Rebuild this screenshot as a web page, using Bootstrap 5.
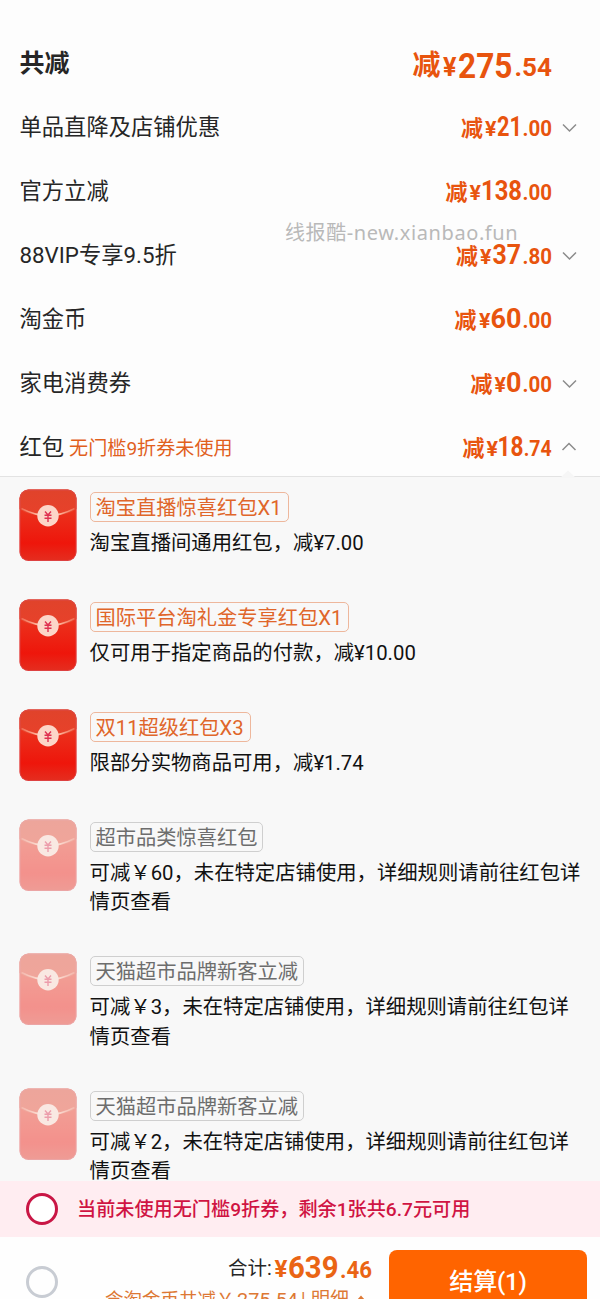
<!DOCTYPE html>
<html lang="zh-CN">
<head>
<meta charset="utf-8">
<meta name="viewport" content="width=device-width, initial-scale=1">
<title>优惠明细</title>
<link href="https://cdn.jsdelivr.net/npm/bootstrap@5.3.0/dist/css/bootstrap.min.css" rel="stylesheet">
<style>
html,body{height:1299px;overflow:hidden}
body{font-family:Roboto,"Noto Sans CJK SC",sans-serif;background:#fdfdfd;color:#262626}
.screen{width:600px;height:1299px}
.sum-list{height:476px;padding-top:30px}
.sum-row{height:64px;padding-left:19.5px;font-size:22.3px}
.sum-row.total{height:65px;font-size:25px;font-weight:700}
.sum-label{padding-top:2px}
.sum-row .hint{font-size:19.1px;color:#e1601d;margin-left:5px}
.price{width:160px;height:64px;fill:#e8540e;font-weight:700;flex:none;overflow:visible}
.price .n{font-family:Roboto,sans-serif}
.price .c{font-family:"Noto Sans CJK SC",sans-serif}
.arrow{width:48px;height:64px;fill:none;stroke:#8c8c8c;stroke-width:1.5;flex:none}
.watermark{left:285px;top:217px;font-family:"Noto Sans","Noto Sans CJK SC",sans-serif;font-size:20px;line-height:32px;color:#b9b9b9;white-space:nowrap;letter-spacing:.6px}
.panel{height:705px;background:#f8f8f8;border-top:1px solid #e3e3e3;padding:12px 0 0 19px}
.notch{right:24px;top:-7px;width:16px;height:8px}
.coupon{height:110px}
.coupon.tall{height:134.4px}
.envelope{width:58px;height:73px;flex:none}
.off .envelope{opacity:.45}
.coupon-text{margin-left:12.6px;padding-top:3px;color:#111}
.tag{height:30px;border:1px solid #eeb79c;border-radius:5px;padding:1px 6px 0 5px;font-size:20.25px;line-height:28px;color:#e0662a;white-space:nowrap}
.off .tag{border-color:#cfcfcf;color:#6d6d6d;padding-right:4.5px}
.desc{font-size:20.35px;line-height:29.3px;margin-top:7px;white-space:nowrap}
.notice{height:56px;background:#ffedf1;color:#d01443;font-size:19.15px;font-weight:500;padding-left:25.5px}
.notice-text{margin-left:19.5px;padding-top:2px}
.ring{width:32px;height:32px;border:3px solid #c91645;border-radius:50%;background:#fff;flex:none}
.ring.idle{border-color:#c8ccd3;background:transparent;margin-top:29px}
.footer-bar{height:62px;background:#fefefe;padding-left:25.5px}
.amount{width:272px;margin-left:46.5px;height:62px;flex:none}
.pay{width:198px;height:62px;margin:13px 0 0 13px;background:#ff6400;color:#fff;border-radius:8px;font-size:24px;font-weight:500;line-height:64px;letter-spacing:-.2px;flex:none}
</style>
</head>
<body>
<svg width="0" height="0" class="position-absolute">
  <defs>
    <linearGradient id="bodyFill" x1="0" y1="0" x2="0" y2="1"><stop offset="0" stop-color="#ea4428"/><stop offset=".45" stop-color="#ec2817"/><stop offset=".75" stop-color="#ee160b"/><stop offset="1" stop-color="#e42e20"/></linearGradient>
    <linearGradient id="flapFill" x1="0" y1="0" x2="0" y2="1"><stop offset="0" stop-color="#e0432b"/><stop offset="1" stop-color="#e8412a"/></linearGradient>
    <linearGradient id="strap" x1="0" y1="0" x2="1" y2="0"><stop offset="0" stop-color="#ffb8a0" stop-opacity=".35"/><stop offset=".3" stop-color="#ffb8a0"/><stop offset=".7" stop-color="#ffb8a0"/><stop offset="1" stop-color="#ffb8a0" stop-opacity=".35"/></linearGradient>
    <symbol id="env" viewBox="0 0 58 73">
      <rect x=".5" y=".5" width="57" height="71.500" rx="9" fill="url(#bodyFill)"/>
      <path d="M.5 20V9.500a9 9 0 0 1 9-9h39a9 9 0 0 1 9 9V20Q49 27 29 27T.5 20Z" fill="url(#flapFill)"/>
      <rect x="1" y="1" width="56" height="70.500" rx="8.500" fill="none" stroke="#d8505a" stroke-opacity=".6"/>
      <path d="M2.500 20.500Q12 27 29 27T55.500 20.500" fill="none"/>
      <path d="M2.500 19.500Q29 33.500 55.500 19.500" fill="none" stroke="url(#strap)" stroke-width="1.500"/>
      <circle cx="29" cy="26.700" r="10.700" fill="#fcd6c8"/>
      <path d="M26 22.500 29 26 32 22.500M25.500 26.300H32.500M25.500 29.300H32.500M29 26V33" fill="none" stroke="#df3050" stroke-width="1.400"/>
    </symbol>
  </defs>
</svg>
<main class="screen position-relative overflow-hidden">
  <section class="sum-list">
    <div class="sum-row total d-flex align-items-center justify-content-between"><span class="sum-label">共减</span><div class="d-flex"><svg class="price"><text class="c" x="20.500" y="44" font-size="28">减</text><text class="n" x="51" y="44.500" font-size="25" textLength="13.500" lengthAdjust="spacingAndGlyphs">¥</text><text class="n" x="66" y="47" font-size="35" textLength="54.500" lengthAdjust="spacingAndGlyphs">275</text><text class="n" x="122.500" y="45" font-size="26.500" textLength="37.500" lengthAdjust="spacingAndGlyphs">.54</text></svg><span class="arrow"></span></div></div>
    <div class="sum-row d-flex align-items-center justify-content-between"><span class="sum-label">单品直降及店铺优惠</span><div class="d-flex"><svg class="price"><text class="c" x="69" y="40.500" font-size="22">减</text><text class="n" x="93" y="40.500" font-size="20" textLength="11.500" lengthAdjust="spacingAndGlyphs">¥</text><text class="n" x="105" y="41" font-size="27" textLength="25" lengthAdjust="spacingAndGlyphs">21</text><text class="n" x="130.500" y="41" font-size="22" textLength="29.500" lengthAdjust="spacingAndGlyphs">.00</text></svg><svg class="arrow"><path d="m11 29.500 6.500 6.500 6.500-6.500"/></svg></div></div>
    <div class="sum-row d-flex align-items-center justify-content-between"><span class="sum-label">官方立减</span><div class="d-flex"><svg class="price"><text class="c" x="53.500" y="40.500" font-size="22">减</text><text class="n" x="77.500" y="40.500" font-size="20" textLength="11.500" lengthAdjust="spacingAndGlyphs">¥</text><text class="n" x="89" y="41" font-size="27" textLength="41" lengthAdjust="spacingAndGlyphs">138</text><text class="n" x="130.500" y="41" font-size="22" textLength="29.500" lengthAdjust="spacingAndGlyphs">.00</text></svg><span class="arrow"></span></div></div>
    <div class="sum-row d-flex align-items-center justify-content-between"><span class="sum-label">88VIP专享9.5折</span><div class="d-flex"><svg class="price"><text class="c" x="64" y="40.500" font-size="22">减</text><text class="n" x="88" y="40.500" font-size="20" textLength="11.500" lengthAdjust="spacingAndGlyphs">¥</text><text class="n" x="100.500" y="41" font-size="27" textLength="28.500" lengthAdjust="spacingAndGlyphs">37</text><text class="n" x="130.500" y="41" font-size="22" textLength="29.500" lengthAdjust="spacingAndGlyphs">.80</text></svg><svg class="arrow"><path d="m11 29.500 6.500 6.500 6.500-6.500"/></svg></div></div>
    <div class="sum-row d-flex align-items-center justify-content-between"><span class="sum-label">淘金币</span><div class="d-flex"><svg class="price"><text class="c" x="62.500" y="40.500" font-size="22">减</text><text class="n" x="87" y="40.500" font-size="20" textLength="11.500" lengthAdjust="spacingAndGlyphs">¥</text><text class="n" x="98.500" y="41" font-size="27" textLength="31" lengthAdjust="spacingAndGlyphs">60</text><text class="n" x="130.500" y="41" font-size="22" textLength="29.500" lengthAdjust="spacingAndGlyphs">.00</text></svg><span class="arrow"></span></div></div>
    <div class="sum-row d-flex align-items-center justify-content-between"><span class="sum-label">家电消费券</span><div class="d-flex"><svg class="price"><text class="c" x="78.500" y="40.500" font-size="22">减</text><text class="n" x="102.500" y="40.500" font-size="20" textLength="11.500" lengthAdjust="spacingAndGlyphs">¥</text><text class="n" x="114" y="41" font-size="27" textLength="15.500" lengthAdjust="spacingAndGlyphs">0</text><text class="n" x="130.500" y="41" font-size="22" textLength="29.500" lengthAdjust="spacingAndGlyphs">.00</text></svg><svg class="arrow"><path d="m11 29.500 6.500 6.500 6.500-6.500"/></svg></div></div>
    <div class="sum-row d-flex align-items-center justify-content-between"><div class="sum-label d-flex align-items-baseline"><span>红包</span><span class="hint">无门槛9折券未使用</span></div><div class="d-flex"><svg class="price"><text class="c" x="70.500" y="40.500" font-size="22">减</text><text class="n" x="94.500" y="40.500" font-size="20" textLength="11.500" lengthAdjust="spacingAndGlyphs">¥</text><text class="n" x="105.500" y="41" font-size="27" textLength="26" lengthAdjust="spacingAndGlyphs">18</text><text class="n" x="131.700" y="41" font-size="22" textLength="28" lengthAdjust="spacingAndGlyphs">.74</text></svg><svg class="arrow"><path d="m10.500 35 6.500-6.500 6.500 6.500"/></svg></div></div>
  </section>
  <div class="watermark position-absolute">线报酷-new.xianbao.fun</div>
  <section class="panel position-relative">
    <svg class="notch position-absolute"><path d="M0 8 8 .5 16 8Z" fill="#f6f6f6"/></svg>
    <div class="coupon d-flex align-items-start"><svg class="envelope"><use href="#env"/></svg><div class="coupon-text"><div class="d-flex"><span class="tag">淘宝直播惊喜红包X1</span></div><div class="desc">淘宝直播间通用红包，减¥7.00</div></div></div>
    <div class="coupon d-flex align-items-start"><svg class="envelope"><use href="#env"/></svg><div class="coupon-text"><div class="d-flex"><span class="tag">国际平台淘礼金专享红包X1</span></div><div class="desc">仅可用于指定商品的付款，减¥10.00</div></div></div>
    <div class="coupon d-flex align-items-start"><svg class="envelope"><use href="#env"/></svg><div class="coupon-text"><div class="d-flex"><span class="tag">双11超级红包X3</span></div><div class="desc">限部分实物商品可用，减¥1.74</div></div></div>
    <div class="coupon tall off d-flex align-items-start"><svg class="envelope"><use href="#env"/></svg><div class="coupon-text"><div class="d-flex"><span class="tag">超市品类惊喜红包</span></div><div class="desc">可减￥60，未在特定店铺使用，详细规则请前往红包详<br>情页查看</div></div></div>
    <div class="coupon tall off d-flex align-items-start"><svg class="envelope"><use href="#env"/></svg><div class="coupon-text"><div class="d-flex"><span class="tag">天猫超市品牌新客立减</span></div><div class="desc">可减￥3，未在特定店铺使用，详细规则请前往红包详<br>情页查看</div></div></div>
    <div class="coupon tall off d-flex align-items-start"><svg class="envelope"><use href="#env"/></svg><div class="coupon-text"><div class="d-flex"><span class="tag">天猫超市品牌新客立减</span></div><div class="desc">可减￥2，未在特定店铺使用，详细规则请前往红包详<br>情页查看</div></div></div>
  </section>
  <div class="notice position-relative d-flex align-items-center"><span class="ring"></span><span class="notice-text">当前未使用无门槛9折券，剩余1张共6.7元可用</span></div>
  <footer class="footer-bar d-flex align-items-start">
    <span class="ring idle"></span>
    <svg class="amount">
      <text x="124" y="38" font-size="19.500" fill="#262626">合计:</text>
      <g fill="#ea6414" font-weight="700"><text x="170.500" y="40" font-size="23" textLength="13" lengthAdjust="spacingAndGlyphs">¥</text><text x="184" y="40.500" font-size="31" textLength="50.500" lengthAdjust="spacingAndGlyphs">639</text><text x="236" y="40.500" font-size="24" textLength="32" lengthAdjust="spacingAndGlyphs">.46</text></g>
      <g fill="#dd7834" font-size="18.500"><text x="1" y="69">含淘金币共减￥</text><text x="133" y="69" textLength="61" lengthAdjust="spacingAndGlyphs">275.54</text><text x="197" y="68">|</text><text x="207" y="69" font-size="19">明细</text><path d="m253 63 4-4.500 4 4.500Z"/></g>
    </svg>
    <div class="pay text-center">结算(1)</div>
  </footer>
</main>
<script src="https://cdn.jsdelivr.net/npm/bootstrap@5.3.0/dist/js/bootstrap.bundle.min.js"></script>
</body>
</html>
